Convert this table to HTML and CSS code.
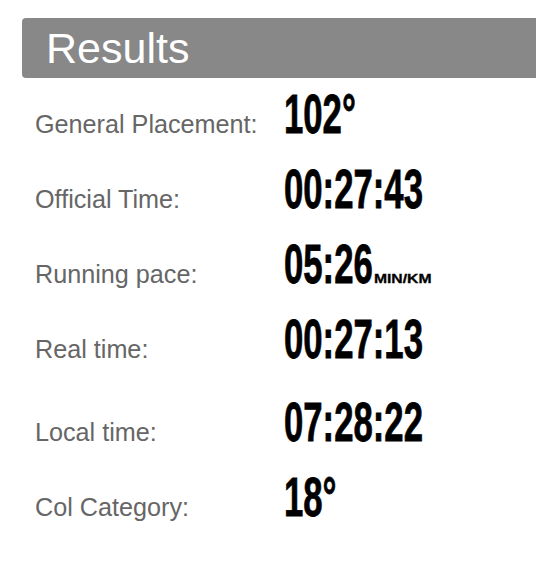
FILE: index.html
```html
<!DOCTYPE html>
<html lang="en">
<head>
<meta charset="utf-8">
<title>Results</title>
<link rel="stylesheet" href="styles.css">
</head>
<body>
<section class="results">
  <h1 class="results__title">Results</h1>
  <div class="results__list">
    <div class="row">
      <span class="row__label">General Placement:</span>
      <span class="row__value">102°</span>
    </div>
    <div class="row">
      <span class="row__label">Official Time:</span>
      <span class="row__value">00:27:43</span>
    </div>
    <div class="row">
      <span class="row__label">Running pace:</span>
      <span class="row__value">05:26<small class="row__unit">MIN/KM</small></span>
    </div>
    <div class="row">
      <span class="row__label">Real time:</span>
      <span class="row__value">00:27:13</span>
    </div>
    <div class="row row--spaced">
      <span class="row__label">Local time:</span>
      <span class="row__value">07:28:22</span>
    </div>
    <div class="row">
      <span class="row__label">Col Category:</span>
      <span class="row__value">18°</span>
    </div>
  </div>
</section>
</body>
</html>
```
FILE: styles.css
```css
html, body {
  margin: 0;
  padding: 0;
  background: #fff;
}

.results {
  padding-top: 18px;
  font-family: "Liberation Sans", Arial, Helvetica, sans-serif;
}

.results__title {
  margin: 0 0 8px 22px;
  height: 60px;
  padding-left: 24px;
  background: #888888;
  border-radius: 4px 0 0 4px;
  color: #fff;
  font-size: 43px;
  font-weight: normal;
  line-height: 60px;
}

.results__list {
  padding-left: 35px;
}

.row {
  display: flex;
  align-items: baseline;
  height: 75px;
}

.row--spaced {
  margin-top: 8px;
}

.row__label {
  width: 249px;
  flex: none;
  color: #666666;
  font-size: 25.2px;
  line-height: 25px;
}

.row__value {
  display: inline-block;
  transform: scaleX(0.62);
  transform-origin: left center;
  color: #000;
  -webkit-text-stroke: 0.8px #000;
  font-family: "Liberation Sans Narrow", "Liberation Sans", sans-serif;
  font-weight: bold;
  font-size: 56px;
  line-height: 56px;
  white-space: nowrap;
}

.row__unit {
  display: inline-block;
  margin-left: 2px;
  transform: scaleX(1.95);
  transform-origin: left bottom;
  font-size: 13px;
  line-height: 13px;
  -webkit-text-stroke: 0.3px #000;
}
```
